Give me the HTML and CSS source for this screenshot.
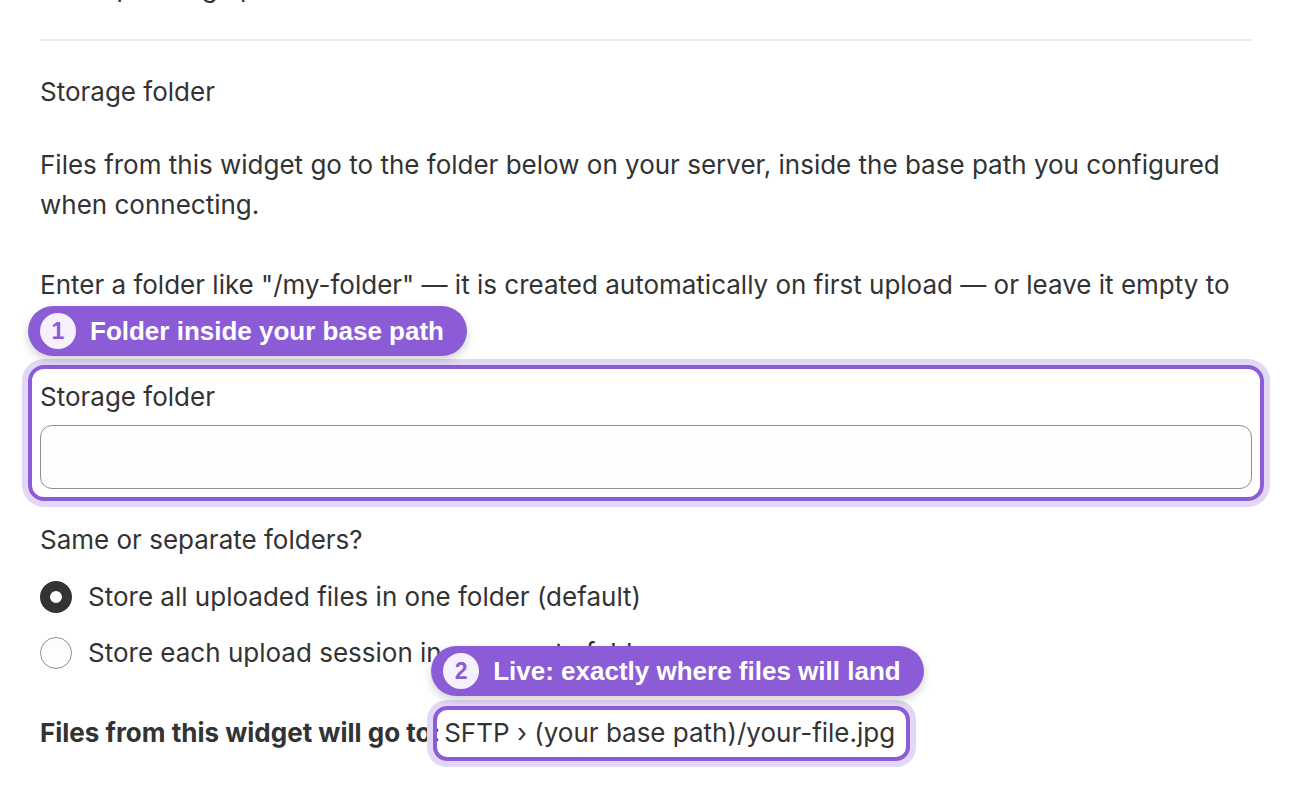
FILE: index.html
```html
<!DOCTYPE html>
<html lang="en">
<head>
<meta charset="utf-8">
<title>Storage folder</title>
<link rel="stylesheet" href="styles.css">
</head>
<body>
<div class="page">
  <p class="cut-line">Sets up storage paths</p>
  <hr class="divider">
  <h3 class="section-title">Storage folder</h3>
  <p class="desc">Files from this widget go to the folder below on your server, inside the base path you configured when connecting.

Enter a folder like "/my-folder" — it is created automatically on first upload — or leave it empty to use the base path.</p>

  <div class="field spot">
    <span class="ring"></span>
    <span class="badge"><span class="num">1</span>Folder inside your base path</span>
    <label class="field-label" for="folder">Storage folder</label>
    <input class="text-input" id="folder" type="text">
  </div>

  <p class="question">Same or separate folders?</p>
  <div class="radios">
    <label class="radio-row"><input class="radio" type="radio" name="mode" checked><span>Store all uploaded files in one folder (default)</span></label>
    <label class="radio-row"><input class="radio" type="radio" name="mode"><span>Store each upload session in a separate folder</span></label>
  </div>

  <p class="dest"><strong>Files from this widget will go to:</strong><span class="path spot"><span class="ring ring-sm"></span><span class="badge badge-2"><span class="num">2</span>Live: exactly where files will land</span>SFTP › (your base path)/your-file.jpg</span></p>
</div>
</body>
</html>
```

FILE: styles.css
```css
* { box-sizing: border-box; }
html, body { margin: 0; background: #ffffff; }
body {
  font-family: Inter, "Noto Sans", sans-serif;
  font-size: 26px;
  line-height: 1.55;
  color: #333333;
}
.page {
  padding: 0 40px 28px;
  display: flex;
  flex-direction: column;
}
p, h3 { margin: 0; }
.cut-line { margin-top: -32px; margin-bottom: 31px; }
.divider {
  border: 0;
  height: 2px;
  background: #ebebeb;
  margin: 0;
}
.section-title {
  font-weight: 400;
  font-size: 26px;
  margin-top: 31px;
}
.desc {
  margin-top: 32px;
  white-space: pre-line;
}
.spot { position: relative; }
.ring {
  position: absolute;
  inset: -12px;
  border: 4px solid #8b5cd6;
  border-radius: 16px;
  box-shadow: 0 0 0 6px #e2d7f5;
  pointer-events: none;
}
.ring-sm { inset: -7px -11px -7px -7px; border-radius: 14px; }
.badge {
  position: absolute;
  left: -12px;
  bottom: calc(100% + 21px);
  height: 50px;
  display: flex;
  align-items: center;
  gap: 14px;
  padding: 0 23px 0 12px;
  background: #8b5cd6;
  color: #ffffff;
  border-radius: 25px;
  font-family: "Liberation Sans", Arial, sans-serif;
  font-weight: 700;
  font-size: 26px;
  line-height: 1;
  white-space: nowrap;
  box-shadow: 0 4px 10px rgba(0, 0, 0, 0.18);
  z-index: 2;
}
.num {
  width: 36px;
  height: 36px;
  border-radius: 50%;
  background: #f6f1fd;
  color: #8b5cd6;
  display: flex;
  align-items: center;
  justify-content: center;
  font-size: 23px;
}
.field {
  margin-top: 31px;
  display: flex;
  flex-direction: column;
  gap: 8px;
}
.field-label { display: block; }
.text-input {
  height: 64px;
  border: 1px solid #8f8f8f;
  border-radius: 12px;
  background: #fdfdfd;
  font: inherit;
  padding: 0 16px;
  width: 100%;
}
.question { margin-top: 31px; }
.radios {
  margin-top: 16px;
  display: flex;
  flex-direction: column;
  gap: 16px;
}
.radio-row {
  display: flex;
  align-items: center;
  gap: 16px;
}
.radio {
  appearance: none;
  -webkit-appearance: none;
  margin: 0;
  width: 32px;
  height: 32px;
  border-radius: 50%;
  border: 1px solid #8f8f8f;
  background: #fdfdfd;
  flex: none;
}
.radio:checked {
  border: 10px solid #333333;
  background: #ffffff;
}
.dest { margin-top: 40px; }
.dest strong { font-weight: 700; }
.path {
  display: inline-block;
  padding: 0 4px;
}
.badge-2 { left: -9px; bottom: calc(100% + 17px); }
```
